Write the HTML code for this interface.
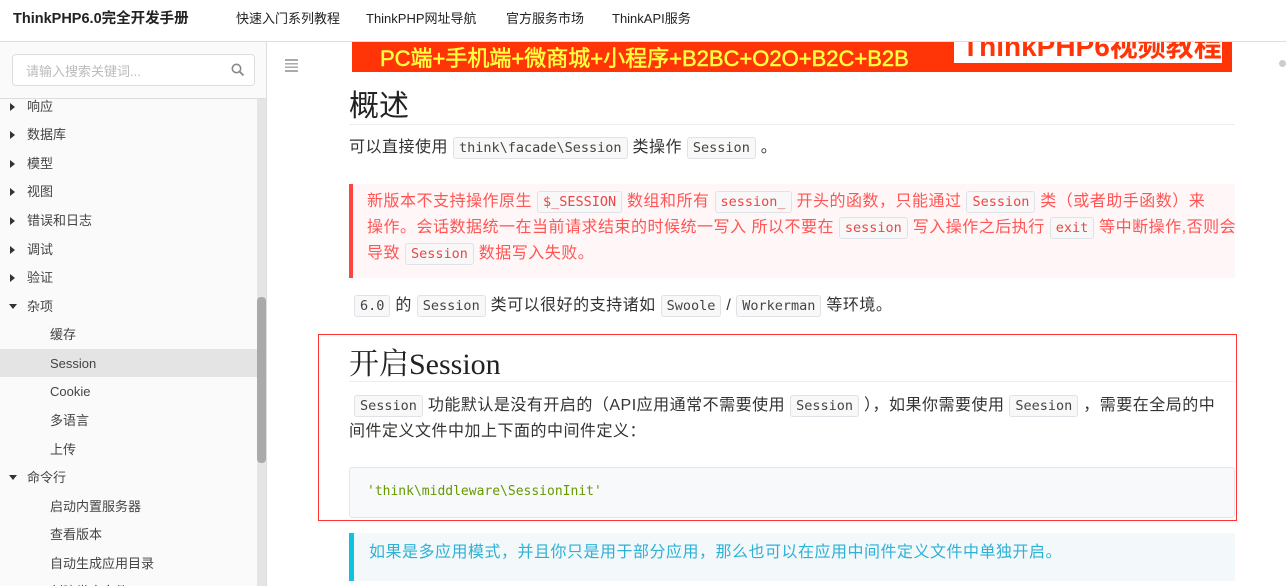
<!DOCTYPE html>
<html><head><meta charset="utf-8"><style>
*{margin:0;padding:0;box-sizing:border-box}
html,body{width:1286px;height:586px;overflow:hidden}
body{background:#fff;font-family:"Liberation Sans","Noto Sans CJK SC",sans-serif;position:relative;color:#333}
.a{position:absolute;white-space:nowrap}
.hdr{left:0;top:0;width:1286px;height:42px;border-bottom:1px solid #ddd;background:#fff}
.nav{font-size:13px;color:#222;top:8px}
.side{left:0;top:42px;width:267px;height:544px;background:#fafafa;border-right:1px solid #ddd;overflow:hidden}
.it{font-size:13px;color:#444;left:27px;line-height:16px}
.sub{left:50px}
.tri{position:absolute;left:-17px;top:4px;width:0;height:0;border-top:4px solid transparent;border-bottom:4px solid transparent;border-left:5px solid #333}
.tri.d{left:-18px;top:5px;border-left:4px solid transparent;border-right:4px solid transparent;border-top:5px solid #333;border-bottom:0}
.c{font-family:"DejaVu Sans Mono","Liberation Mono",monospace;font-size:13.5px;background:#f8f8f8;border:1px solid #e1e1e8;border-radius:3px;padding:2px 5px;color:#444;letter-spacing:0}
.p{font-size:16px;color:#333;line-height:22px;letter-spacing:0.5px}
.r{color:#f55}
.r .c{color:#e44}
</style></head><body>
<div class="a hdr"></div>
<div class="a" style="left:13px;top:7px;font-size:14.5px;font-weight:bold;color:#222">ThinkPHP6.0完全开发手册</div>
<div class="a nav" style="left:236px">快速入门系列教程</div>
<div class="a nav" style="left:366px">ThinkPHP网址导航</div>
<div class="a nav" style="left:506px">官方服务市场</div>
<div class="a nav" style="left:612px">ThinkAPI服务</div>

<div class="a side">
<div class="a" style="left:12px;top:12px;width:243px;height:32px;border:1px solid #ddd;border-radius:4px;background:#fff"></div>
<div class="a" style="left:26px;top:19px;font-size:13px;color:#bbb">请输入搜索关键词...</div>
<svg class="a" style="left:231px;top:21px" width="14" height="14"><circle cx="5.5" cy="5.5" r="4.2" fill="none" stroke="#888" stroke-width="1.6"/><line x1="8.5" y1="8.5" x2="12.5" y2="12.5" stroke="#888" stroke-width="1.8"/></svg>
<div class="a" style="left:0;top:56px;width:267px;border-top:1px solid #ddd"></div>
<div class="a" style="left:0;top:307px;width:257px;height:28px;background:#e4e4e4"></div>
<div class="a" style="left:257px;top:57px;width:10px;height:487px;background:#e5e5e5"></div>
<div class="a" style="left:257px;top:255px;width:9px;height:166px;background:#aaa;border-radius:4px"></div>
<div class="a it" style="top:57px"><i class="tri"></i>响应</div>
<div class="a it" style="top:85px"><i class="tri"></i>数据库</div>
<div class="a it" style="top:114px"><i class="tri"></i>模型</div>
<div class="a it" style="top:142px"><i class="tri"></i>视图</div>
<div class="a it" style="top:171px"><i class="tri"></i>错误和日志</div>
<div class="a it" style="top:200px"><i class="tri"></i>调试</div>
<div class="a it" style="top:228px"><i class="tri"></i>验证</div>
<div class="a it" style="top:257px"><i class="tri d"></i>杂项</div>
<div class="a it sub" style="top:285px">缓存</div>
<div class="a it sub" style="top:314px">Session</div>
<div class="a it sub" style="top:342px">Cookie</div>
<div class="a it sub" style="top:371px">多语言</div>
<div class="a it sub" style="top:400px">上传</div>
<div class="a it" style="top:428px"><i class="tri d"></i>命令行</div>
<div class="a it sub" style="top:457px">启动内置服务器</div>
<div class="a it sub" style="top:485px">查看版本</div>
<div class="a it sub" style="top:514px">自动生成应用目录</div>
<div class="a it sub" style="top:542px">创建类库文件</div>
</div>

<svg class="a" style="left:285px;top:59px" width="13" height="13"><g fill="#aaa"><rect y="0" width="13" height="2"/><rect y="4" width="13" height="1.5"/><rect y="7.5" width="13" height="1.5"/><rect y="11" width="13" height="2"/></g></svg>

<div class="a" style="left:352px;top:42px;width:880px;height:30px;background:#ff3508"></div>
<div class="a" style="left:380px;top:41px;font-size:22px;color:#ffff40;-webkit-text-stroke:0.5px #ffff40">PC端+手机端+微商城+小程序+B2BC+O2O+B2C+B2B</div>
<div class="a" style="left:954px;top:42px;width:268px;height:21px;background:#fff;overflow:hidden"><div class="a" style="left:8px;top:-17px;font-size:28px;font-weight:bold;color:#ff3508">ThinkPHP6视频教程</div></div>
<div class="a" style="left:1279px;top:60px;width:7px;height:7px;border-radius:50%;background:#ccc"></div>

<div class="a" style="left:349px;top:81px;font-size:30px;color:#222;font-family:'Liberation Serif','Noto Sans CJK SC',serif">概述</div>
<div class="a" style="left:349px;top:124px;width:886px;border-top:1px solid #eee"></div>
<div class="a p" style="left:349px;top:137px">可以直接使用 <span class="c">think\facade\Session</span> 类操作 <span class="c">Session</span> 。</div>

<div class="a" style="left:349px;top:184px;width:886px;height:94px;background:#fff7f7;border-left:4px solid #f44"></div>
<div class="a p r" style="left:367px;top:191px">新版本不支持操作原生 <span class="c">$_SESSION</span> 数组和所有 <span class="c">session_</span> 开头的函数，只能通过 <span class="c">Session</span> 类（或者助手函数）来</div>
<div class="a p r" style="left:367px;top:217px">操作。会话数据统一在当前请求结束的时候统一写入 所以不要在 <span class="c">session</span> 写入操作之后执行 <span class="c">exit</span> 等中断操作,否则会</div>
<div class="a p r" style="left:367px;top:243px">导致 <span class="c">Session</span> 数据写入失败。</div>

<div class="a p" style="left:354px;top:295px"><span class="c">6.0</span> 的 <span class="c">Session</span> 类可以很好的支持诸如 <span class="c">Swoole</span> / <span class="c">Workerman</span> 等环境。</div>

<div class="a" style="left:318px;top:334px;width:919px;height:187px;border:1px solid #f33"></div>
<div class="a" style="left:349px;top:339px;font-size:30px;color:#222;font-family:'Liberation Serif','Noto Serif CJK SC',serif">开启Session</div>
<div class="a" style="left:349px;top:381px;width:886px;border-top:1px solid #eee"></div>
<div class="a p" style="left:354px;top:395px"><span class="c">Session</span> 功能默认是没有开启的（API应用通常不需要使用 <span class="c">Session</span> ），如果你需要使用 <span class="c">Seesion</span> ，需要在全局的中</div>
<div class="a p" style="left:349px;top:421px">间件定义文件中加上下面的中间件定义：</div>
<div class="a" style="left:349px;top:467px;width:886px;height:51px;background:#f8f9fa;border:1px solid #e5e5e5;border-radius:3px"></div>
<div class="a" style="left:367px;top:484px;font-family:'DejaVu Sans Mono','Liberation Mono',monospace;font-size:13px;color:#690">'think\middleware\SessionInit'</div>

<div class="a" style="left:349px;top:533px;width:886px;height:48px;background:#f3f8fb;border-left:5px solid #0bc2df"></div>
<div class="a p" style="left:369px;top:542px;color:#2eb1d6">如果是多应用模式，并且你只是用于部分应用，那么也可以在应用中间件定义文件中单独开启。</div>
</body></html>
